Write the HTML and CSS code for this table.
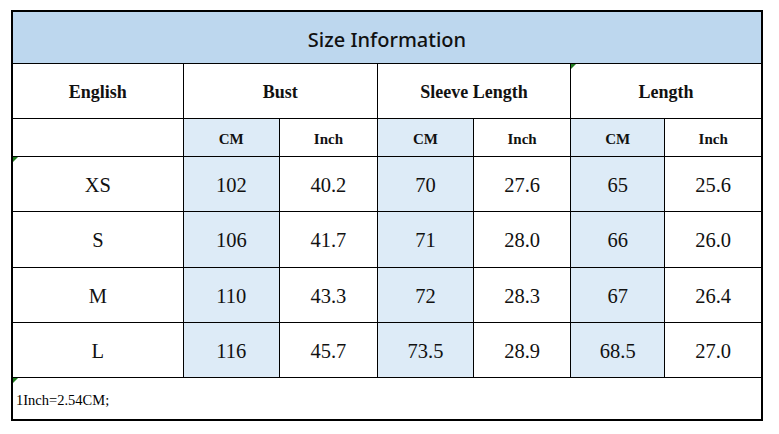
FILE: index.html
```html
<!DOCTYPE html>
<html lang="en">
<head>
    <meta charset="UTF-8" />
    <title>Size Information</title>
    <link rel="stylesheet" href="styles.css">
</head>
<body>
    <table class="size-table">
        <colgroup>
            <col class="c-label">
            <col class="c-cm">
            <col class="c-in-wide">
            <col class="c-cm">
            <col class="c-in">
            <col class="c-cm-narrow">
            <col class="c-in">
        </colgroup>
        <tr class="title-row">
            <td colspan="7">Size Information</td>
        </tr>
        <tr class="head-row">
            <td>English</td>
            <td colspan="2">Bust</td>
            <td colspan="2">Sleeve Length</td>
            <td colspan="2" class="mark">Length</td>
        </tr>
        <tr class="unit-row">
            <td></td>
            <td class="cm">CM</td>
            <td>Inch</td>
            <td class="cm">CM</td>
            <td>Inch</td>
            <td class="cm">CM</td>
            <td>Inch</td>
        </tr>
        <tr class="data-row">
            <td class="mark">XS</td>
            <td class="cm">102</td><td>40.2</td>
            <td class="cm">70</td><td>27.6</td>
            <td class="cm">65</td><td>25.6</td>
        </tr>
        <tr class="data-row">
            <td>S</td>
            <td class="cm">106</td><td>41.7</td>
            <td class="cm">71</td><td>28.0</td>
            <td class="cm">66</td><td>26.0</td>
        </tr>
        <tr class="data-row">
            <td>M</td>
            <td class="cm">110</td><td>43.3</td>
            <td class="cm">72</td><td>28.3</td>
            <td class="cm">67</td><td>26.4</td>
        </tr>
        <tr class="data-row">
            <td>L</td>
            <td class="cm">116</td><td>45.7</td>
            <td class="cm">73.5</td><td>28.9</td>
            <td class="cm">68.5</td><td>27.0</td>
        </tr>
        <tr class="note-row">
            <td colspan="7" class="mark">1Inch=2.54CM;</td>
        </tr>
    </table>
</body>
</html>
```

FILE: styles.css
```css
body {
    margin: 0;
    background: #fff;
    color: #000;
    font-family: "Liberation Serif", "Times New Roman", serif;
}

.size-table {
    margin: 10px 0 0 11px;
    border-collapse: collapse;
    table-layout: fixed;
    width: 752px;
    border: 2px solid #000;
}

.c-label { width: 171px; }
.c-cm { width: 96px; }
.c-in-wide { width: 98px; }
.c-in { width: 97px; }
.c-cm-narrow { width: 94px; }

.size-table td {
    border: 1px solid #000;
    padding: 3px 0 0;
    text-align: center;
    vertical-align: middle;
}

.title-row td {
    height: 48px;
    background: #bdd7ee;
    font-family: "Noto Sans", "Open Sans", sans-serif;
    font-size: 20px;
    font-weight: 500;
    color: #111;
}

.head-row td {
    height: 51px;
    font-size: 18px;
    font-weight: bold;
    color: #111;
}

.unit-row td {
    height: 34px;
    font-size: 15px;
    font-weight: bold;
    color: #111;
}

.data-row td {
    height: 51.25px;
    font-size: 20.5px;
    color: #111;
}

.size-table td.cm {
    background: #ddebf7;
}

.note-row td {
    height: 38px;
    text-align: left;
    padding-left: 3px;
    font-size: 14.5px;
}

.mark {
    position: relative;
}

.mark::before {
    content: "";
    position: absolute;
    top: 0;
    left: 0;
    border-top: 5px solid #1f7a1f;
    border-right: 5px solid transparent;
}
```
